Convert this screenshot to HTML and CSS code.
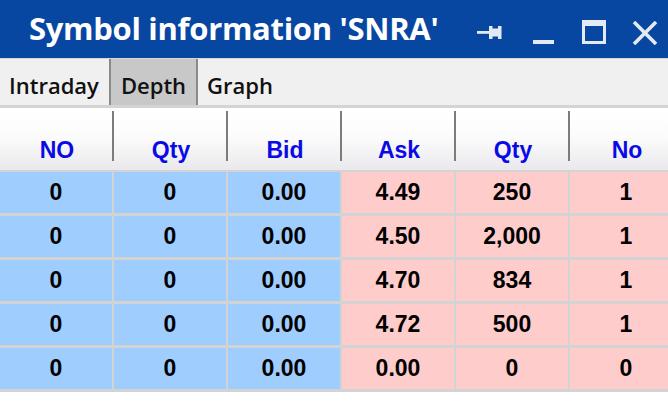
FILE: index.html
```html
<!DOCTYPE html>
<html>
<head>
<meta charset="utf-8">
<link rel="stylesheet" href="styles.css">
</head>
<body>
<div class="window">
  <div class="titlebar">
    <div class="title">Symbol information 'SNRA'</div>
    <div class="controls">
      <svg class="ic pin" width="26" height="16" viewBox="0 0 26 16">
        <rect x="0" y="6" width="13" height="2.8" fill="currentColor"/>
        <path d="M12 1 H15.5 V3.5 H21 V1 H24.5 V14 H21 V11.5 H15.5 V14 H12 Z" fill="currentColor"/>
      </svg>
      <svg class="ic min" width="22" height="6" viewBox="0 0 22 6">
        <rect x="0" y="1" width="21" height="4" fill="currentColor"/>
      </svg>
      <svg class="ic max" width="26" height="26" viewBox="0 0 26 26">
        <path d="M1 1 H25 V25 H1 Z M4 7 V22 H22 V7 Z" fill="currentColor" fill-rule="evenodd"/>
      </svg>
      <svg class="ic close" width="26" height="24" viewBox="0 0 26 24">
        <path d="M2 1 L24 23 M24 1 L2 23" stroke="currentColor" stroke-width="3.6"/>
      </svg>
    </div>
  </div>
  <div class="tabs">
    <div class="tab">Intraday</div>
    <div class="tab active">Depth</div>
    <div class="tab last">Graph</div>
  </div>
  <div class="gap"></div>
  <div class="table">
    <div class="head">
      <div class="hc">NO</div>
      <div class="hc">Qty</div>
      <div class="hc">Bid</div>
      <div class="hc">Ask</div>
      <div class="hc">Qty</div>
      <div class="hc">No</div>
    </div>
    <div class="body">
      <div class="c b">0</div><div class="c b">0</div><div class="c b">0.00</div><div class="c a">4.49</div><div class="c a">250</div><div class="c a">1</div>
      <div class="c b">0</div><div class="c b">0</div><div class="c b">0.00</div><div class="c a">4.50</div><div class="c a">2,000</div><div class="c a">1</div>
      <div class="c b">0</div><div class="c b">0</div><div class="c b">0.00</div><div class="c a">4.70</div><div class="c a">834</div><div class="c a">1</div>
      <div class="c b">0</div><div class="c b">0</div><div class="c b">0.00</div><div class="c a">4.72</div><div class="c a">500</div><div class="c a">1</div>
      <div class="c b">0</div><div class="c b">0</div><div class="c b">0.00</div><div class="c a">0.00</div><div class="c a">0</div><div class="c a">0</div>
    </div>
  </div>
</div>
</body>
</html>
```

FILE: styles.css
```css
* { box-sizing: border-box; }
html, body { margin: 0; padding: 0; background: #fff; }
.window {
  width: 668px;
  height: 412px;
  overflow: hidden;
  background: #fff;
}
.titlebar {
  height: 58px;
  background: #0746a1;
  display: flex;
  align-items: center;
  justify-content: space-between;
  padding: 0 10px 0 29px;
  color: #fff;
}
.title {
  font-family: "Open Sans", Roboto, "Liberation Sans", sans-serif;
  font-weight: 700;
  font-size: 31px;
  letter-spacing: -0.3px;
  padding-bottom: 2px;
}
.controls {
  display: flex;
  align-items: center;
  color: #e4eaf4;
  height: 58px;
}
.ic { display: block; }
.pin { margin-right: 30px; margin-top: 8px; }
.min { margin-right: 26px; margin-top: 26px; }
.max { margin-right: 25px; margin-top: 6px; }
.close { margin-top: 8px; }
.tabs {
  height: 50px;
  background: #f0f0f0;
  border-top: 1px solid #d6d6d6;
  border-bottom: 3px solid #d4d4d4;
  display: flex;
  font-family: "Open Sans", "DejaVu Sans", sans-serif;
  font-weight: 600;
  font-size: 22px;
  color: #111;
}
.tab {
  display: flex;
  align-items: center;
  padding: 6px 10px 0 9px;
  border-right: 2px solid #8a8a8a;
  height: 100%;
}
.tab.active { background: #c8c8c8; padding-left: 10px; }
.tab.last { border-right: none; }
.gap { height: 3px; }
.table {
  width: 684px;
  font-family: "Liberation Sans", Arial, sans-serif;
  font-weight: 700;
}
.head {
  display: grid;
  grid-template-columns: repeat(6, 114px);
  height: 59px;
  padding-bottom: 9px;
  background: linear-gradient(#ffffff 0%, #fbfbfb 45%, #e9e9ec 100%);
}
.hc {
  display: flex;
  align-items: flex-end;
  justify-content: center;
  border-right: 2px solid #7c7c7c;
  color: #0a0ae6;
  font-size: 23px;
  line-height: 22px;
  padding-bottom: 0;
  padding-left: 2px;
}
.body {
  display: grid;
  grid-template-columns: repeat(6, 112px);
  grid-auto-rows: 41px;
  column-gap: 2px;
  row-gap: 3px;
  background: #d3d3d3;
  border-top: 2px solid #d3d3d3;
  border-bottom: 3px solid #d3d3d3;
  font-size: 23px;
  color: #000;
}
.c {
  display: flex;
  align-items: center;
  justify-content: center;
}
.b { background: #9fcdfd; }
.a { background: #ffcccc; }
```
